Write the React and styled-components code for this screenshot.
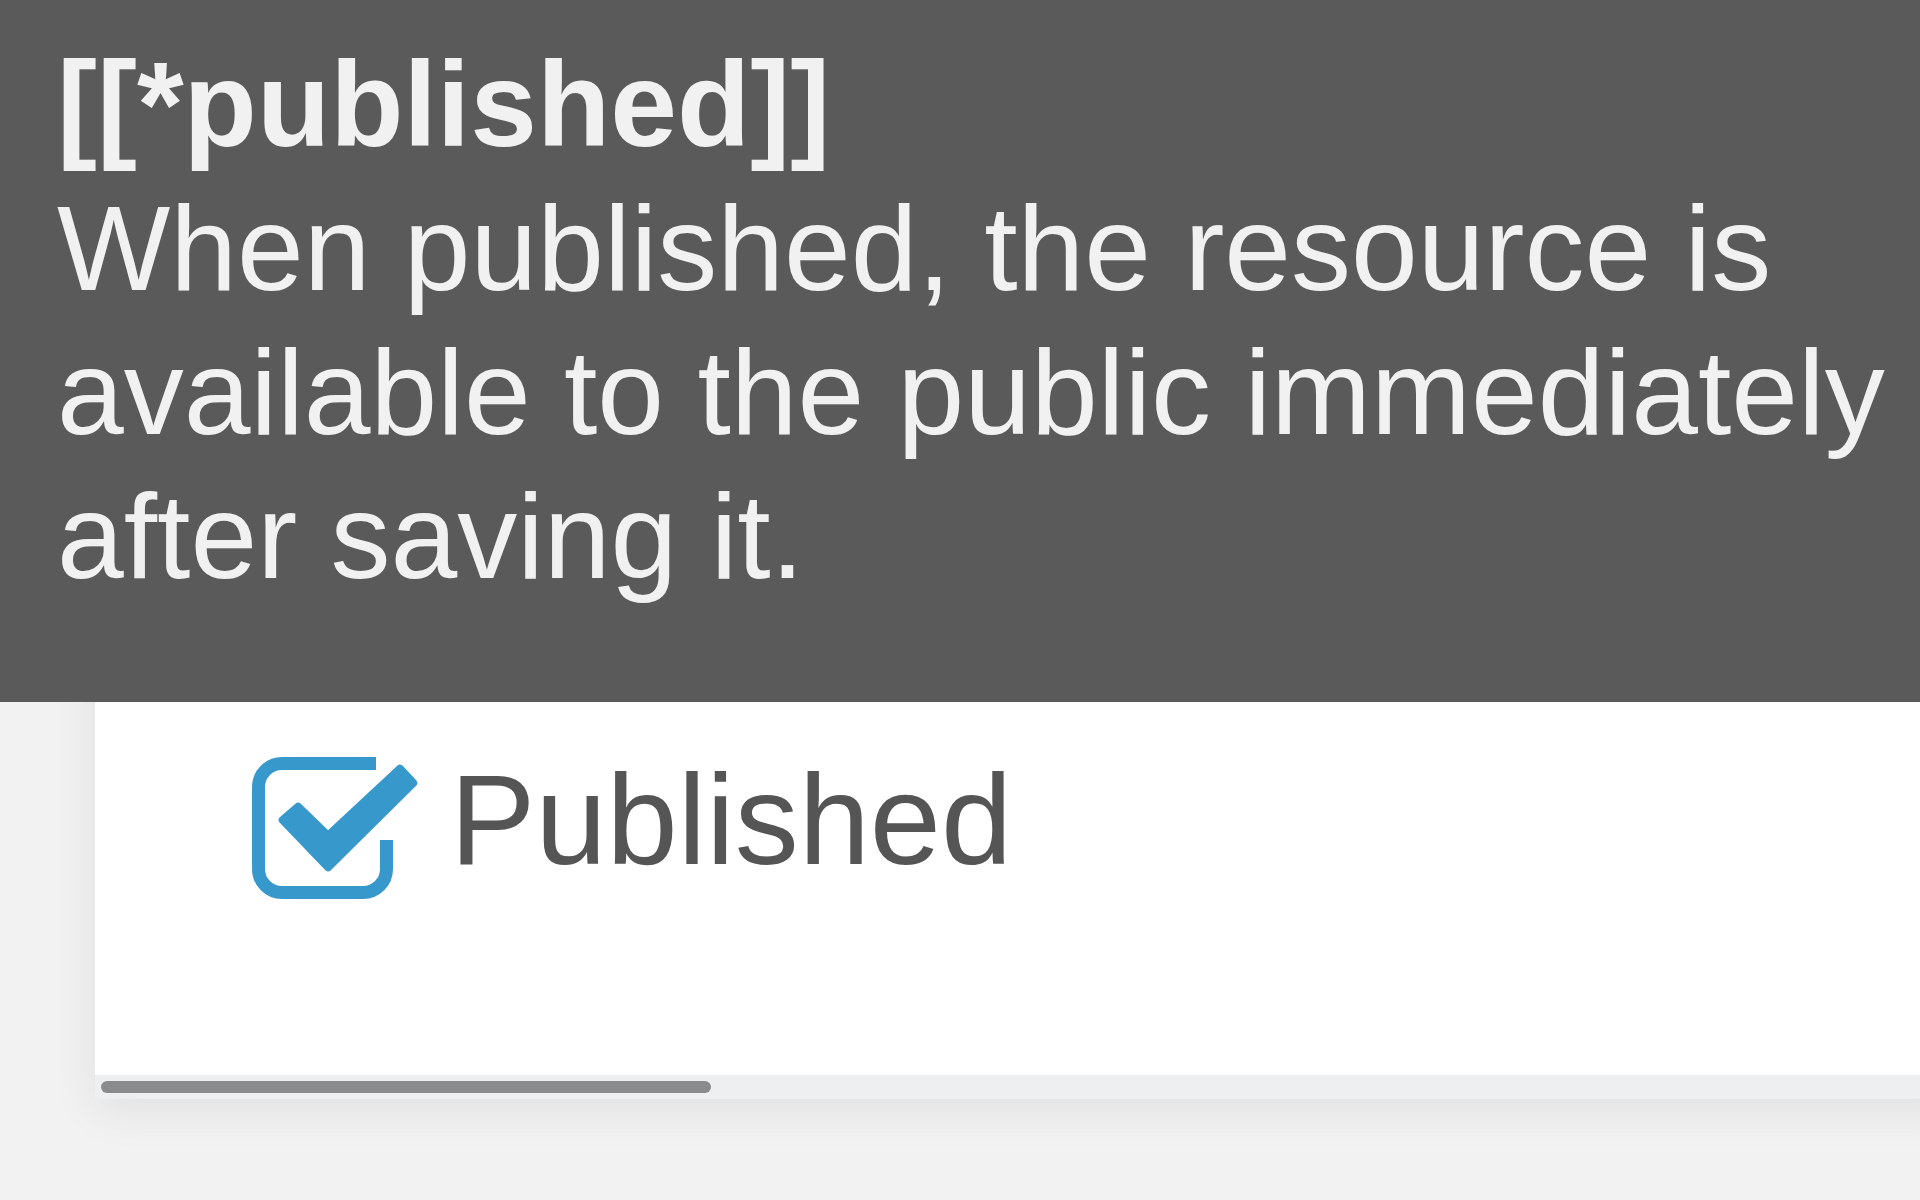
import React from 'react';
import styled, { createGlobalStyle } from 'styled-components';

const GlobalStyle = createGlobalStyle`
    html, body {
        margin: 0;
        padding: 0;
        background: #f2f2f2;
        font-family: "Liberation Sans", Helvetica, Arial, sans-serif;
        overflow: hidden;
    }
    * {
        box-sizing: border-box;
    }
`;

const CheckSquareIcon = () => (
    <svg width="170" height="142" viewBox="0 0 170 142" aria-hidden="true">
        <path
            d="M124 6.5 H30 A23.5 23.5 0 0 0 6.5 30 V112 A23.5 23.5 0 0 0 30 135.5 H111 A23.5 23.5 0 0 0 134.5 112 V83"
            fill="none"
            stroke="#3798cc"
            strokeWidth="13"
        />
        <path
            d="M30.7 63 L46 49.7 L76 78.7 L148 11.7 L161.3 26 L76 110.3 Z"
            fill="#3798cc"
            stroke="#3798cc"
            strokeWidth="8"
            strokeLinejoin="round"
        />
    </svg>
);

const App = () => {
    return (
        <>
            <GlobalStyle />
            <Page>
                <Card>
                    <CardBody>
                        <CheckRow>
                            <CheckSquareIcon />
                            <CheckLabel>Published</CheckLabel>
                        </CheckRow>
                    </CardBody>
                    <ScrollTrack>
                        <ScrollThumb />
                    </ScrollTrack>
                </Card>
                <Tooltip>
                    <TooltipTitle>[[*published]]</TooltipTitle>
                    <TooltipText>
                        When published, the resource is available to the public immediately after saving it.
                    </TooltipText>
                </Tooltip>
            </Page>
        </>
    );
};

const Page = styled.div`
    position: relative;
    width: 1920px;
    height: 1200px;
    padding: 650px 0 0 95px;
    overflow: hidden;
`;

const Tooltip = styled.div`
    position: absolute;
    top: 0;
    left: 0;
    right: 0;
    padding: 32px 24px 94px 57px;
    background: #5a5a5a;
    color: #f1f1f1;
    font-size: 120px;
    line-height: 144px;
`;

const TooltipTitle = styled.div`
    font-weight: bold;
`;

const TooltipText = styled.div`
    font-weight: normal;
`;

const Card = styled.div`
    display: flex;
    flex-direction: column;
    width: calc(100% + 40px);
    background: #fff;
    box-shadow: 0 10px 44px rgba(0, 0, 0, 0.08);
`;

const CardBody = styled.div`
    height: 425px;
    padding: 107px 0 0 157px;
`;

const CheckRow = styled.div`
    display: flex;
    align-items: flex-start;
    gap: 28px;
`;

const CheckLabel = styled.span`
    color: #555;
    font-size: 128px;
    line-height: 128px;
    margin-top: -1px;
`;

const ScrollTrack = styled.div`
    height: 24px;
    padding: 6px;
    background: #eeeff1;
`;

const ScrollThumb = styled.div`
    width: 610px;
    height: 12px;
    border-radius: 6px;
    background: #8a8b8d;
`;

export default App;
